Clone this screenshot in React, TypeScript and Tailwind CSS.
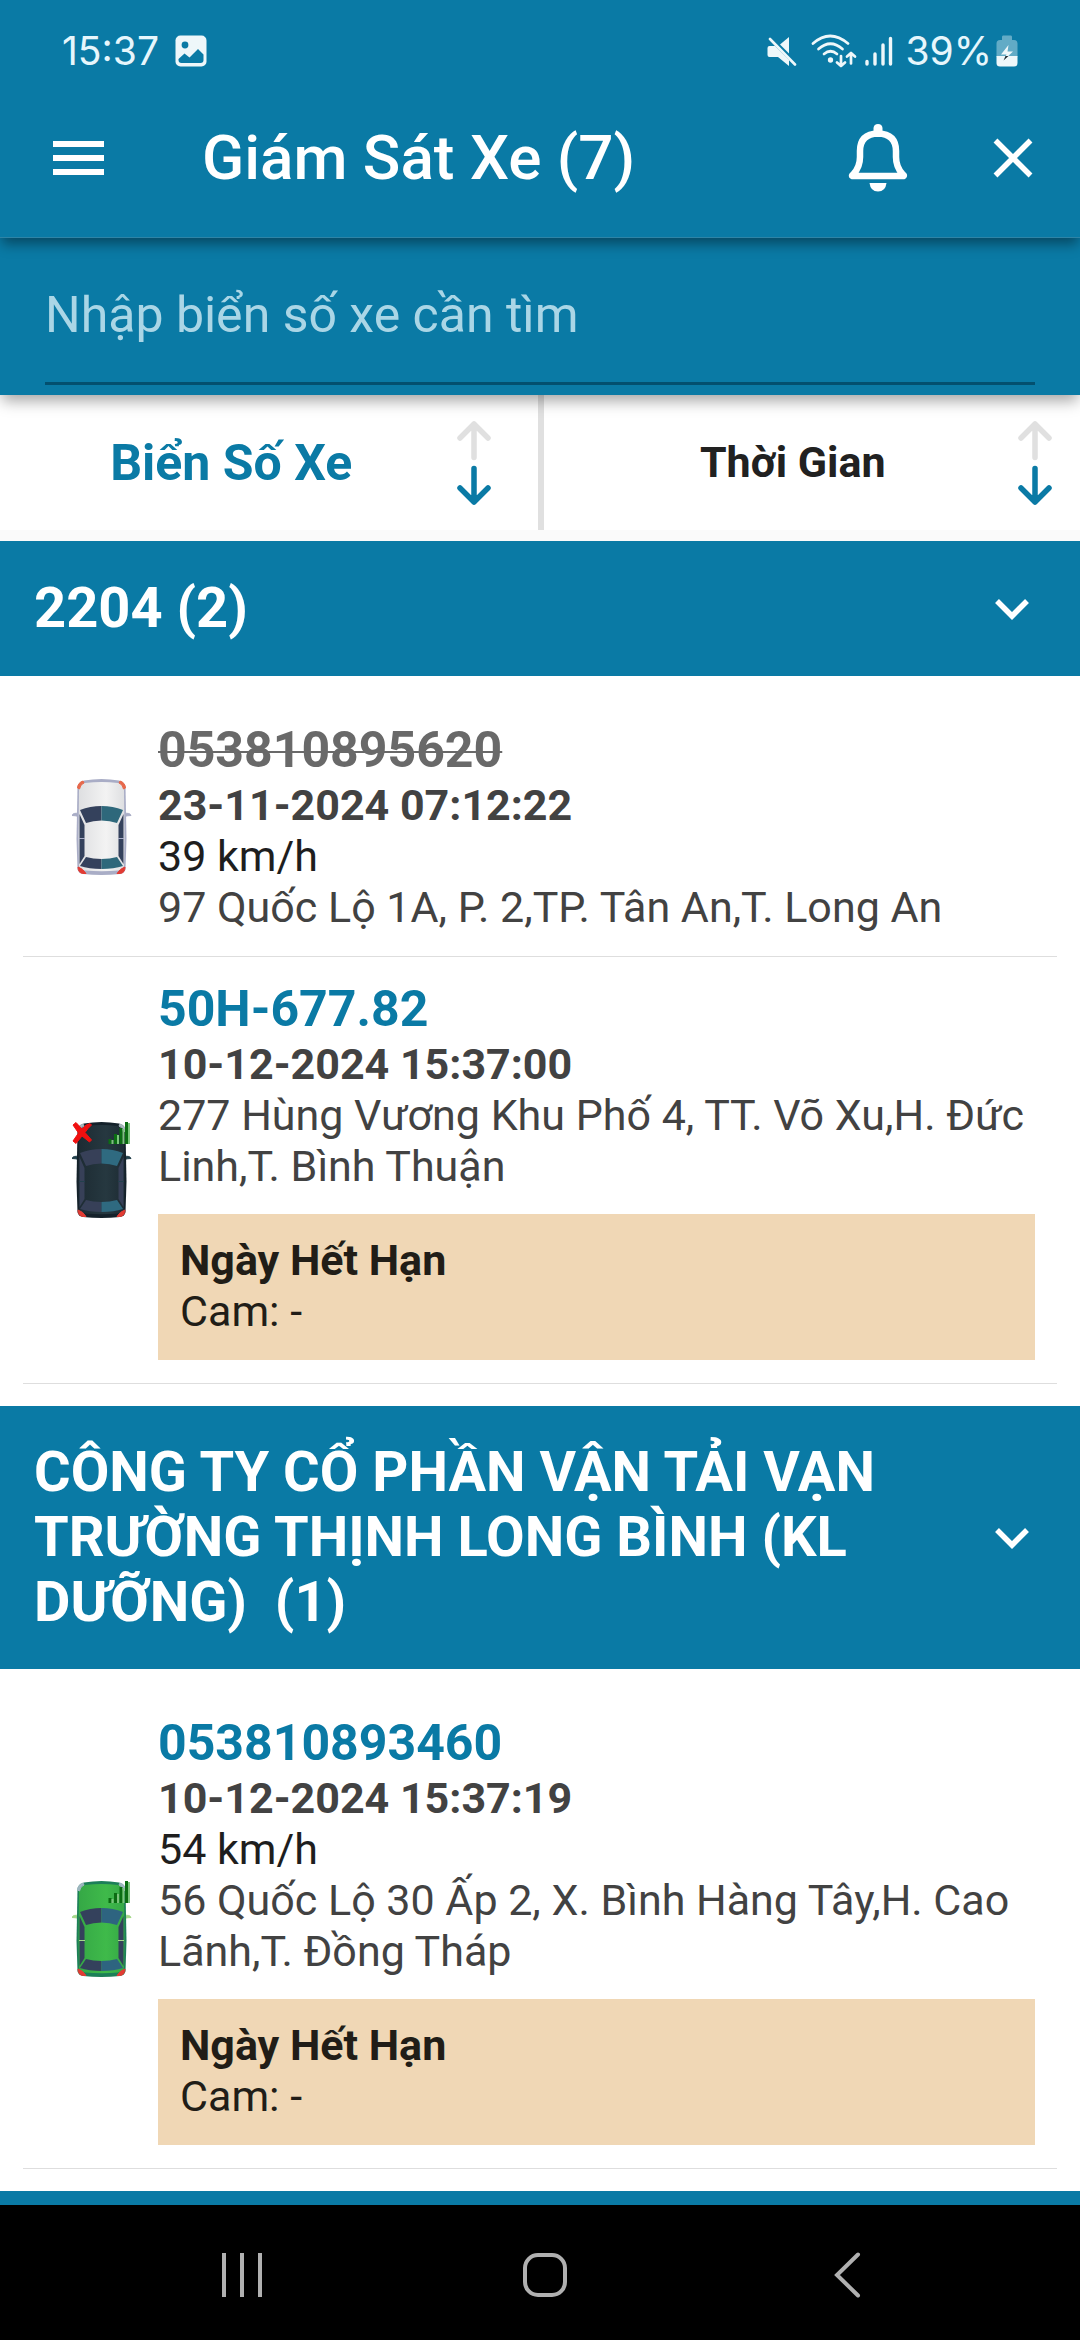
import React from 'react';

interface Vehicle {
    plate: string;
    time: string;
    speed?: string;
    address: string;
    camera?: string;
    expired?: boolean;
    noGps?: boolean;
    signal?: boolean;
    color: CarColor;
}

interface VehicleGroup {
    name: string;
    vehicles: Vehicle[];
}

type CarColor = 'white' | 'black' | 'green';

const CAR_COLORS = {
    white: { rim: '#a9adc6', body: '#dedfe1', shine: '#f3f3f3', left: '#34415c', right: '#2e687b', mirror: '#a9adc6', lamp: '#e8684a' },
    black: { rim: '#14212a', body: '#1d2b33', shine: '#263840', left: '#374058', right: '#2f6a80', mirror: '#22404c', lamp: '#a9b8bd' },
    green: { rim: '#1c7f58', body: '#35a846', shine: '#3fba4a', left: '#34415c', right: '#2e6480', mirror: '#a5d88a', lamp: '#9fb7c0' },
};

const GROUPS: VehicleGroup[] = [
    {
        name: '2204 (2)',
        vehicles: [
            {
                plate: '053810895620',
                time: '23-11-2024 07:12:22',
                speed: '39 km/h',
                address: '97 Quốc Lộ 1A, P. 2,TP. Tân An,T. Long An',
                expired: true,
                color: 'white',
            },
            {
                plate: '50H-677.82',
                time: '10-12-2024 15:37:00',
                address: '277 Hùng Vương Khu Phố 4, TT. Võ Xu,H. Đức Linh,T. Bình Thuận',
                camera: '-',
                noGps: true,
                signal: true,
                color: 'black',
            },
        ],
    },
    {
        name: 'CÔNG TY CỔ PHẦN VẬN TẢI VẠN TRƯỜNG THỊNH LONG BÌNH (KL DƯỠNG)  (1)',
        vehicles: [
            {
                plate: '053810893460',
                time: '10-12-2024 15:37:19',
                speed: '54 km/h',
                address: '56 Quốc Lộ 30 Ấp 2, X. Bình Hàng Tây,H. Cao Lãnh,T. Đồng Tháp',
                camera: '-',
                signal: true,
                color: 'green',
            },
        ],
    },
];

const StatusBar = () => (
    <div className="flex h-[78px] items-center px-[62px] pt-6 font-[Inter,sans-serif] text-[39px] leading-[48px] text-[#e6f6fc]">
        <span>15:37</span>
        <svg viewBox="0 0 32 32" className="ml-4 size-8">
            <rect x="0.5" y="0.5" width="31" height="31" rx="5" fill="#eef7fa" />
            <circle cx="10" cy="10" r="3.4" fill="#0a7aa5" />
            <path d="M3.5 24 L9.5 18.5 L14.5 22.5 L23 14 L28.5 19.5 V25 Q28.5 28 25.5 28 H6.5 Q3.5 28 3.5 25 Z" fill="#0a7aa5" />
        </svg>
        {/* muted */}
        <svg viewBox="0 0 30 30" className="ml-auto size-[30px]">
            <path d="M22 1 V17.5 L13 8.5 Z" fill="#eef7fa" />
            <path d="M2 10 H8 L22 24 V30 L11 21 H2.5 Q0.5 21 0.5 19 V12 Q0.5 10 2.5 10 Z" fill="#eef7fa" />
            <path d="M3 3 L28 28.5" stroke="#eef7fa" strokeWidth="2.6" strokeLinecap="round" />
        </svg>
        {/* wifi */}
        <svg viewBox="0 0 46 34" className="ml-3.5 h-[34px] w-[46px]" fill="none" stroke="#eef7fa" strokeWidth="2.7" strokeLinecap="round" strokeLinejoin="round">
            <path d="M2 9.5 Q19 -5.5 37 9.5" />
            <path d="M7.5 15 Q19.5 4.5 31.5 15" />
            <path d="M13 20 Q19.5 14.5 26 20" />
            <circle cx="19.5" cy="26" r="1.3" fill="#eef7fa" />
            <path d="M30 22 V32 M26 28.5 L30 32 L34 28.5" />
            <path d="M40 29.5 V19 M36 22.5 L40 19 L44 22.5" />
        </svg>
        {/* mobile signal */}
        <svg viewBox="0 0 28 30" className="ml-2 h-[30px] w-7" stroke="#eef7fa" strokeWidth="3.4" strokeLinecap="round">
            <path d="M2 25.5 V28 M10 18 V28 M18 9 V28 M25.5 2.5 V28" />
        </svg>
        <span className="ml-3">39%</span>
        {/* battery */}
        <svg viewBox="0 0 22 32" className="ml-1 h-8 w-[22px]">
            <path d="M7 0.5 H15 Q16 0.5 16 2 V5 H18 Q21.5 5 21.5 8.5 V22 H0.5 V8.5 Q0.5 5 4 5 H6 V2 Q6 0.5 7 0.5 Z" fill="#62abc6" />
            <path d="M0.5 21 H21.5 V28 Q21.5 31.5 18 31.5 H4 Q0.5 31.5 0.5 28 Z" fill="#eef7fa" />
            <path d="M12.5 10 L5 19.5 H10.5 L7.5 25.5 L17 16.5 H11.5 Z" fill="#eef7fa" />
            <path d="M9.5 21 H12.5 L7.5 25.5 Z" fill="#1d2a33" />
        </svg>
    </div>
);

const Header = () => (
    <header className="relative z-20 border-b border-[#2e84a6] bg-[#0a7aa5] shadow-[0_8px_12px_-2px_rgba(0,0,0,0.4)]">
        <StatusBar />
        <div className="flex h-[159px] items-center pl-[52px] pr-[47px] text-white">
            <button aria-label="Menu">
                <svg viewBox="0 0 54 36" className="h-9 w-[54px]" fill="currentColor">
                    <rect x="1" y="1" width="51" height="6" />
                    <rect x="1" y="15" width="51" height="6" />
                    <rect x="1" y="29" width="51" height="6" />
                </svg>
            </button>
            <h1 className="ml-24 flex-1 text-[62px] leading-[72px] font-medium">Giám Sát Xe (7)</h1>
            <button aria-label="Thông báo" className="mr-[85px]">
                <svg viewBox="0 0 60 68" className="h-[68px] w-[60px]">
                    <path d="M25.5 7 V4 Q26 0 30 0 Q34 0 34.5 4 V7 Z" fill="currentColor" />
                    <path
                        d="M30 9.5 Q12 10 12 27 V33 Q12 43 5.5 50 Q3.5 51.5 4.5 52 H55.5 Q56.5 51.5 54.5 50 Q48 43 48 33 V27 Q48 10 30 9.5 Z"
                        fill="none"
                        stroke="currentColor"
                        strokeWidth="6.5"
                        strokeLinejoin="round"
                    />
                    <path d="M21.5 59 H38.5 Q37.5 67.5 30 67.5 Q22.5 67.5 21.5 59 Z" fill="currentColor" />
                </svg>
            </button>
            <button aria-label="Đóng">
                <svg viewBox="0 0 40 40" className="size-10" stroke="currentColor" strokeWidth="5.5">
                    <path d="M2.5 2.5 L37.5 37.5 M37.5 2.5 L2.5 37.5" />
                </svg>
            </button>
        </div>
    </header>
);

const SortArrows = () => (
    <svg viewBox="0 0 34 84" className="h-[84px] w-[34px] shrink-0" fill="none" strokeWidth="5.5" strokeLinecap="round" strokeLinejoin="round">
        <path d="M17 36.5 V3 M3 17 L17 3 L31 17" stroke="#e0e0e0" />
        <path d="M17 47.5 V81 M3 67 L17 81 L31 67" stroke="#0a7aa5" />
    </svg>
);

const SignalBars = () => (
    <g>
        {[5, 10, 16, 22].map((h, i) => (
            <g key={h}>
                <rect x={36.5 + i * 5.5} y={22 - h} width="3" height={h} fill="#0b6d12" />
                <rect x={39.5 + i * 5.5} y={22 - h + 1} width="2" height={h - 1} fill="#7cc47c" />
            </g>
        ))}
    </g>
);

const Car: React.FC<{ vehicle: Vehicle }> = ({ vehicle }) => {
    const c = CAR_COLORS[vehicle.color];
    const gradient = `body-${vehicle.color}`;

    return (
        <svg viewBox="0 0 60 96" className="h-24 w-[60px] shrink-0">
            <defs>
                <linearGradient id={gradient}>
                    <stop offset="0" stopColor={c.body} />
                    <stop offset="0.6" stopColor={c.shine} />
                    <stop offset="1" stopColor={c.body} />
                </linearGradient>
            </defs>
            {/* mirrors */}
            <path d="M0 36.5 Q1 33.5 7 34.5 V37.5 Q3 36.5 0 36.5 Z M59 36.5 Q58 33.5 52 34.5 V37.5 Q56 36.5 59 36.5 Z" fill={c.mirror} stroke={c.mirror} />
            <path d="M5.5 8 Q6 3 12 1.5 Q29.5 -1.5 47 1.5 Q53 3 53.5 8 L54.5 60 L53.5 90 Q53 94 48 95 Q29.5 97 11 95 Q6 94 5.5 90 L4.5 60 Z" fill={c.rim} />
            <path d="M7 10 Q8 5 13 4 Q29.5 2 46 4 Q51 5 52 10 L52.5 60 L52 87 Q51 91 46 91.5 Q29.5 93 13 91.5 Q8 91 7 87 L6.5 60 Z" fill={`url(#${gradient})`} />
            {/* lamps */}
            <path d="M5.5 9 Q6 3.5 11 2 L12 4 Q8.5 5 7.5 10 Z M53.5 9 Q53 3.5 48 2 L47 4 Q50.5 5 51.5 10 Z" fill={c.lamp} stroke={c.lamp} />
            <path d="M6 88 Q11 89.5 14 94.5 L10.5 94.5 Q6 93.5 6 88 Z M53 88 Q48 89.5 45 94.5 L48.5 94.5 Q53 93.5 53 88 Z" fill="#e23b33" stroke="#e23b33" />
            {/* windscreen and rear window */}
            <path d="M8 31 Q18 27 29.5 27 V41.5 Q21 41.5 14 44 Z" fill={c.left} />
            <path d="M51 31 Q41 27 29.5 27 V41.5 Q38 41.5 45 44 Z" fill={c.right} />
            <path d="M14 78 Q21 80 29.5 80 V90 Q17 90 8 87 Z" fill={c.left} />
            <path d="M45 78 Q38 80 29.5 80 V90 Q42 90 51 87 Z" fill={c.right} />
            {/* side windows */}
            <path d="M7.5 35 L12.5 46 V77 L7.5 85 Z M51.5 35 L46.5 46 V77 L51.5 85 Z" fill={c.left} />
            <path d="M7 59.5 H13 M46 59.5 H52" stroke={c.mirror} strokeWidth="1.2" />
            {vehicle.noGps && (
                <path d="M1 3 L4 0.5 L10 7 Q14 2 18 1.5 L19.5 3 Q16 6 13 10.5 L19.5 18 L17.5 20 L10 14 L4 21.5 L1 19 L6.5 11 Z" fill="#f01010" stroke="#f01010" />
            )}
            {vehicle.signal && <SignalBars />}
        </svg>
    );
};

const VehicleRow: React.FC<{ vehicle: Vehicle }> = ({ vehicle }) => (
    <li className="mx-[23px] flex items-center gap-[26px] border-b border-[#dedede] pt-[22px] pr-[22px] pb-[23px] pl-[49px]">
        <Car vehicle={vehicle} />
        <div className="flex-1 text-[43px] leading-[51px] text-[#424242]">
            {vehicle.expired ? (
                <h3 className="text-[50px] leading-[60px] font-bold text-[#696969] line-through decoration-2">{vehicle.plate}</h3>
            ) : (
                <h3 className="text-[50px] leading-[60px] font-bold text-[#0a7aa5]">{vehicle.plate}</h3>
            )}
            <p className="font-bold">{vehicle.time}</p>
            {vehicle.speed && <p className="text-[#1e1e1e]">{vehicle.speed}</p>}
            <p>{vehicle.address}</p>
            {vehicle.camera && (
                <div className="mt-[22px] bg-[#f0d7b5] px-[22px] pt-[21px] pb-[23px] text-[#211d17]">
                    <p className="font-bold">Ngày Hết Hạn</p>
                    <p>Cam: {vehicle.camera}</p>
                </div>
            )}
        </div>
    </li>
);

const Group: React.FC<{ group: VehicleGroup }> = ({ group }) => (
    <section>
        <button className="flex min-h-[135px] w-full items-center bg-[#0a7aa5] pt-[34px] pr-[50px] pb-[34px] pl-[34px] text-left text-white">
            <span className="flex-1 text-[56px] leading-[65px] font-bold whitespace-pre-wrap">{group.name}</span>
            <svg viewBox="0 0 36 24" className="ml-9 h-6 w-9 shrink-0" fill="none" stroke="currentColor" strokeWidth="5.5">
                <path d="M3 4 L18 19 L33 4" />
            </svg>
        </button>
        <ul className="py-[22px]">
            {group.vehicles.map((vehicle) => (
                <VehicleRow key={vehicle.plate} vehicle={vehicle} />
            ))}
        </ul>
    </section>
);

const NavBar = () => (
    <nav className="flex h-[135px] shrink-0 items-center justify-between bg-black pt-1 pr-[210px] pl-[219px] text-[#b0b0b0]">
        <button aria-label="Recents">
            <svg viewBox="0 0 46 46" className="size-[46px]" stroke="currentColor" strokeWidth="4">
                <path d="M5 1 V45 M23 1 V45 M41 1 V45" />
            </svg>
        </button>
        <button aria-label="Home">
            <svg viewBox="0 0 46 46" className="size-[46px]" fill="none" stroke="currentColor" strokeWidth="4">
                <rect x="3" y="3" width="40" height="40" rx="13" />
            </svg>
        </button>
        <button aria-label="Back">
            <svg viewBox="0 0 46 46" className="size-[46px]" fill="none" stroke="currentColor" strokeWidth="4" strokeLinecap="round">
                <path d="M34 2.5 L13 23 L34 43.5" />
            </svg>
        </button>
    </nav>
);

export default function App() {
    return (
        <div className="flex h-screen flex-col overflow-hidden bg-white font-[Roboto,sans-serif]">
            <Header />
            <div className="relative z-10 bg-[#0a7aa5] px-[45px] py-2.5 shadow-[0_8px_14px_-2px_rgba(0,0,0,0.35)]">
                <input
                    type="text"
                    aria-label="Nhập biển số xe cần tìm"
                    placeholder="Nhập biển số xe cần tìm"
                    className="h-[137px] w-full border-b-3 border-[#03506f] bg-transparent text-[50px] text-white outline-none placeholder:text-[#aad6e6]"
                />
            </div>
            <div className="flex h-[135px] shrink-0">
                <button className="flex flex-1 items-center border-r-3 border-[#e0e0e0] pr-[47px] pl-1.5">
                    <span className="flex-1 text-[50px] leading-[60px] font-bold text-[#0a7aa5]">Biển Số Xe</span>
                    <SortArrows />
                </button>
                <button className="flex flex-1 items-center border-l-3 border-[#e0e0e0] pr-7 pl-6">
                    <span className="flex-1 text-[43px] leading-[51px] font-bold text-[#212121]">Thời Gian</span>
                    <SortArrows />
                </button>
            </div>
            <main className="min-h-0 flex-1 overflow-hidden border-t-11 border-[#fafafa]">
                {GROUPS.map((group) => (
                    <Group key={group.name} group={group} />
                ))}
                <div className="h-[135px] bg-[#0a7aa5]" />
            </main>
            <NavBar />
        </div>
    );
}
